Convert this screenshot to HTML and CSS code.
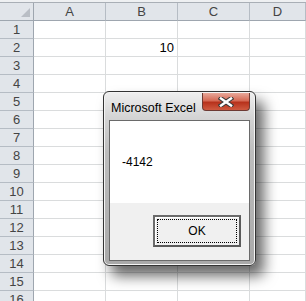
FILE: index.html
```html
<!DOCTYPE html>
<html lang="en">
<head>
    <meta charset="UTF-8">
    <title>Microsoft Excel</title>
    <link rel="stylesheet" href="styles.css">
</head>
<body>
    <div class="topbar"></div>

    <!-- Worksheet -->
    <div class="sheet">
        <div class="hdr corner"><span class="tri"></span></div>
        <div class="hdr col">A</div>
        <div class="hdr col">B</div>
        <div class="hdr col">C</div>
        <div class="hdr col last">D</div>

        <div class="hdr row">1</div><div class="cell"></div><div class="cell"></div><div class="cell"></div><div class="cell"></div>
        <div class="hdr row">2</div><div class="cell"></div><div class="cell num">10</div><div class="cell"></div><div class="cell"></div>
        <div class="hdr row">3</div><div class="cell"></div><div class="cell"></div><div class="cell"></div><div class="cell"></div>
        <div class="hdr row">4</div><div class="cell"></div><div class="cell"></div><div class="cell"></div><div class="cell"></div>
        <div class="hdr row">5</div><div class="cell"></div><div class="cell"></div><div class="cell"></div><div class="cell"></div>
        <div class="hdr row">6</div><div class="cell"></div><div class="cell"></div><div class="cell"></div><div class="cell"></div>
        <div class="hdr row">7</div><div class="cell"></div><div class="cell"></div><div class="cell"></div><div class="cell"></div>
        <div class="hdr row">8</div><div class="cell"></div><div class="cell"></div><div class="cell"></div><div class="cell"></div>
        <div class="hdr row">9</div><div class="cell"></div><div class="cell"></div><div class="cell"></div><div class="cell"></div>
        <div class="hdr row">10</div><div class="cell"></div><div class="cell"></div><div class="cell"></div><div class="cell"></div>
        <div class="hdr row">11</div><div class="cell"></div><div class="cell"></div><div class="cell"></div><div class="cell"></div>
        <div class="hdr row">12</div><div class="cell"></div><div class="cell"></div><div class="cell"></div><div class="cell"></div>
        <div class="hdr row">13</div><div class="cell"></div><div class="cell"></div><div class="cell"></div><div class="cell"></div>
        <div class="hdr row">14</div><div class="cell"></div><div class="cell"></div><div class="cell"></div><div class="cell"></div>
        <div class="hdr row">15</div><div class="cell"></div><div class="cell"></div><div class="cell"></div><div class="cell"></div>
        <div class="hdr row">16</div><div class="cell"></div><div class="cell"></div><div class="cell"></div><div class="cell"></div>
    </div>

    <!-- MsgBox window -->
    <div class="dialog">
        <div class="titlebar">
            <span class="title">Microsoft Excel</span>
            <button class="close">
                <svg width="16" height="10" viewBox="0 0 16 10">
                    <path d="M3 1.5 L13 8.5 M13 1.5 L3 8.5" stroke="#3a3a3a" stroke-width="4.5" stroke-linecap="square"/>
                    <path d="M3 1.5 L13 8.5 M13 1.5 L3 8.5" stroke="#ffffff" stroke-width="2.5" stroke-linecap="square"/>
                </svg>
            </button>
        </div>
        <div class="client">
            <div class="message">-4142</div>
            <div class="buttons">
                <button class="ok"><span class="focus">OK</span></button>
            </div>
        </div>
    </div>
</body>
</html>
```

FILE: styles.css
```css
body {
    margin: 0;
    background: #ffffff;
    font-family: "Liberation Sans", Arial, sans-serif;
    overflow: hidden;
    height: 301px;
    position: relative;
}
.topbar {
    height: 2px;
    background: #eef0f2;
    border-bottom: 1px solid #a9afb6;
}
.sheet {
    display: grid;
    grid-template-columns: 34px 72px 72px 72px 1fr;
    grid-auto-rows: 18px;
}
.sheet > div {
    box-sizing: border-box;
    border-right: 1px solid #dadcdd;
    border-bottom: 1px solid #dadcdd;
}
.hdr {
    background: #e1e5ea;
    color: #444;
    font-size: 13px;
    display: flex;
    align-items: center;
    justify-content: center;
}
.sheet > .hdr {
    border-color: #b5bcc4;
}
.sheet > .col {
    border-bottom-color: #9ea6af;
}
.sheet > .row {
    border-right-color: #9ea6af;
}
.sheet > .corner {
    position: relative;
    border-bottom-color: #9ea6af;
    border-right-color: #9ea6af;
}
.tri {
    position: absolute;
    right: 3px;
    bottom: 3px;
    width: 0;
    height: 0;
    border-left: 9px solid transparent;
    border-bottom: 9px solid #b9bec5;
}
.cell.num {
    font-size: 13px;
    color: #000;
    text-align: right;
    padding-right: 3px;
    line-height: 18px;
}

/* dialog */
.dialog {
    position: absolute;
    left: 103px;
    top: 91px;
    width: 153px;
    height: 175px;
    box-sizing: border-box;
    border: 1px solid #333;
    border-radius: 6px;
    background: linear-gradient(#efefef 0, #d4d4d4 25px, #bdbdbd 60px, #a9a9a9 100%);
    box-shadow: inset 0 0 0 1px #f4f4f4, 8px 10px 14px rgba(0, 0, 0, 0.6);
    display: flex;
    flex-direction: column;
    padding: 0 5px 4px 5px;
}
.titlebar {
    height: 28px;
    display: flex;
    justify-content: space-between;
    align-items: flex-start;
}
.title {
    font-size: 12.5px;
    color: #000;
    margin-top: 9px;
    margin-left: 2px;
}
.close {
    width: 48px;
    height: 18px;
    margin-top: 1px;
    padding: 0;
    border: 1px solid #6d3a33;
    border-top: none;
    border-radius: 0 0 4px 4px;
    background: linear-gradient(#e8a89a 0, #d56a55 45%, #b7321c 55%, #cf5a40 100%);
    display: flex;
    align-items: center;
    justify-content: center;
}
.client {
    flex: 1;
    border: 1px solid #6a6a6a;
    background: #f0f0f0;
    display: flex;
    flex-direction: column;
}
.message {
    background: #ffffff;
    height: 82px;
    box-sizing: border-box;
    padding: 34px 0 0 12px;
    font-size: 12px;
    color: #000;
}
.buttons {
    display: flex;
    justify-content: flex-end;
    padding: 12px 8px 0 0;
}
.ok {
    width: 88px;
    height: 32px;
    box-sizing: border-box;
    padding: 2px;
    border: 2px solid #6b6b6b;
    border-right-color: #5a5a5a;
    border-bottom-color: #5a5a5a;
    background: #f0f0f0;
    box-shadow: inset 1px 1px 0 #ffffff;
    font-family: "Liberation Sans", Arial, sans-serif;
    font-size: 12px;
    color: #000;
    display: flex;
}
.focus {
    flex: 1;
    border: 1px dotted #000;
    display: flex;
    align-items: center;
    justify-content: center;
}
```
